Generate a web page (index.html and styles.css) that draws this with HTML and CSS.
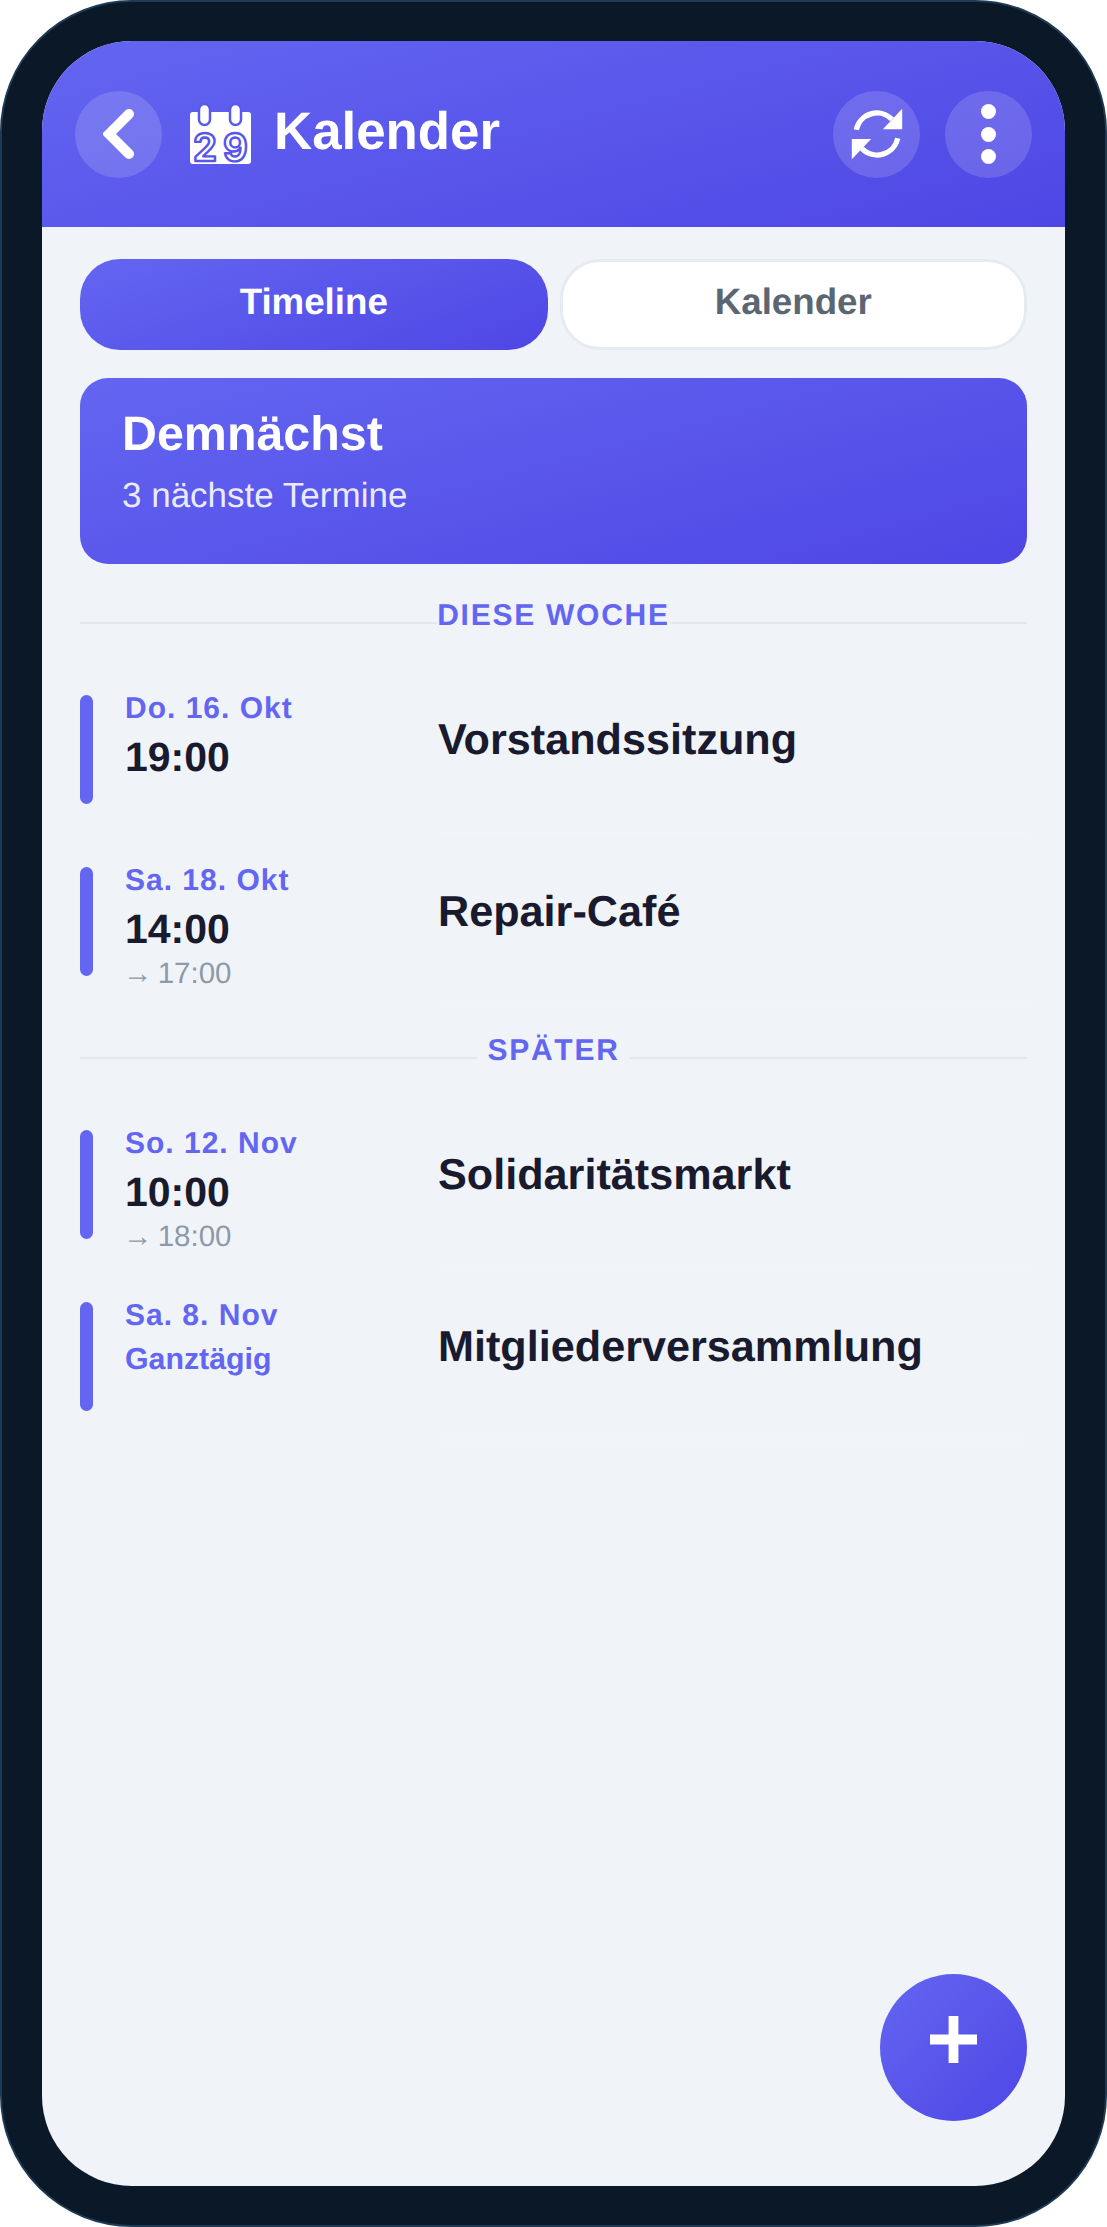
FILE: index.html
```html
<!DOCTYPE html>
<html lang="de">
<head>
<meta charset="utf-8">
<title>Kalender</title>
<link rel="stylesheet" href="styles.css">
</head>
<body>
<div class="phone">
  <div class="screen">
    <header class="header">
      <button class="round back" aria-label="Zurück">
        <svg class="ico-back" viewBox="0 0 32 50"><path d="M26 5 L6 25 L26 45"/></svg>
      </button>
      <svg class="ico-cal" viewBox="0 0 61 60">
        <rect class="cal-body" x="0" y="8" width="61" height="52" rx="3"/>
        <rect class="cal-ring" x="9" y="0" width="11" height="21" rx="5.5"/>
        <rect class="cal-ring" x="40" y="0" width="11" height="21" rx="5.5"/>
        <text class="cal-num" x="3" y="57">2</text>
        <text class="cal-num" x="33" y="57">9</text>
      </svg>
      <h1 class="title">Kalender</h1>
      <div class="actions">
        <button class="round" aria-label="Aktualisieren">
          <svg class="ico-sync" viewBox="0 0 512 512">
            <path class="arc" d="M52 214 A208 208 0 0 1 404 112"/>
            <polygon class="tip" points="504,8 504,208 314,208"/>
            <path class="arc" d="M460 298 A208 208 0 0 1 108 400"/>
            <polygon class="tip" points="8,504 8,304 198,304"/>
          </svg>
        </button>
        <button class="round" aria-label="Menü">
          <span class="dots"><i></i><i></i><i></i></span>
        </button>
      </div>
    </header>

    <main class="content">
      <div class="tabs">
        <div class="tab active">Timeline</div>
        <div class="tab">Kalender</div>
      </div>

      <section class="hero">
        <h2>Demnächst</h2>
        <p>3 nächste Termine</p>
      </section>

      <div class="section first"><span>DIESE WOCHE</span></div>

      <article class="row">
        <div class="bar"></div>
        <div class="when">
          <div class="date">Do. 16. Okt</div>
          <div class="time">19:00</div>
        </div>
        <div class="what">Vorstandssitzung</div>
      </article>
      <article class="row">
        <div class="bar"></div>
        <div class="when">
          <div class="date">Sa. 18. Okt</div>
          <div class="time">14:00</div>
          <div class="end">→ 17:00</div>
        </div>
        <div class="what">Repair-Café</div>
      </article>

      <div class="section"><span>SPÄTER</span></div>

      <article class="row">
        <div class="bar"></div>
        <div class="when">
          <div class="date">So. 12. Nov</div>
          <div class="time">10:00</div>
          <div class="end">→ 18:00</div>
        </div>
        <div class="what">Solidaritätsmarkt</div>
      </article>
      <article class="row">
        <div class="bar"></div>
        <div class="when">
          <div class="date">Sa. 8. Nov</div>
          <div class="allday">Ganztägig</div>
        </div>
        <div class="what">Mitgliederversammlung</div>
      </article>
    </main>

    <button class="fab" aria-label="Neu">
      <svg viewBox="0 0 48 48"><path d="M24 0V48M0 24H48"/></svg>
    </button>
  </div>
</div>
</body>
</html>
```

FILE: styles.css
```css
* { box-sizing: border-box; }
html, body { margin: 0; padding: 0; background: #fff; }
body {
  font-family: "Liberation Sans", Arial, sans-serif;
  width: 1107px;
  height: 2227px;
  text-rendering: geometricPrecision;
}

.phone {
  width: 1107px;
  height: 2227px;
  padding: 39px 40px;
  background: #0a1828;
  border: 2px solid #1e3a54;
  border-radius: 132px;
}
.screen {
  position: relative;
  height: 100%;
  display: flex;
  flex-direction: column;
  background: #f0f4f9;
  border-radius: 90px;
  overflow: hidden;
}

.header {
  height: 186px;
  flex: none;
  display: flex;
  align-items: center;
  padding: 0 33px;
  color: #fff;
  background: linear-gradient(165deg, #6366f1 0%, #4f46e5 100%);
}
.round {
  width: 87px;
  height: 87px;
  flex: none;
  padding: 0;
  border: 0;
  border-radius: 50%;
  background: rgba(255, 255, 255, 0.15);
  display: flex;
  align-items: center;
  justify-content: center;
}
.ico-back { width: 32px; height: 50px; }
.ico-back path { fill: none; stroke: #fff; stroke-width: 10; stroke-linecap: round; stroke-linejoin: miter; }
.ico-cal { width: 61px; height: 60px; margin-left: 28px; overflow: visible; flex: none; }
.cal-body { fill: #fff; }
.cal-ring { fill: #fff; stroke: #5b58ec; stroke-width: 2.5; }
.cal-num {
  font-family: Inter, "Liberation Sans", sans-serif;
  font-size: 38px;
  font-weight: 700;
  fill: #fff;
  stroke: #5756e9;
  stroke-width: 2.4;
  stroke-linejoin: round;
}
.title { margin: 0 0 3px 23px; font-size: 52.8px; font-weight: 700; line-height: 1; }
.actions { margin-left: auto; display: flex; gap: 25px; }
.ico-sync { width: 52px; height: 52px; }
.arc { fill: none; stroke: #fff; stroke-width: 52; }
.tip { fill: #fff; }
.dots { display: flex; flex-direction: column; gap: 7.5px; }
.dots i { display: block; width: 15px; height: 15px; border-radius: 50%; background: #fff; }

.content { flex: 1; padding: 32px 38px 0; }
.tabs { display: flex; gap: 12px; }
.tab {
  flex: 1 1 0;
  height: 91px;
  padding-bottom: 5px;
  border-radius: 40px;
  border: 3px solid #e6ebf1;
  background: #fff;
  color: #5b6673;
  font-size: 36.7px;
  font-weight: 700;
  display: flex;
  align-items: center;
  justify-content: center;
}
.tab.active {
  border-color: transparent;
  color: #fff;
  background: linear-gradient(160deg, #6366f1 0%, #4f46e5 100%) border-box;
}

.hero {
  margin-top: 28px;
  height: 186px;
  padding: 28px 42px 0;
  border-radius: 28px;
  color: #fff;
  background: linear-gradient(165deg, #6366f1 0%, #4f46e5 100%);
}
.hero h2 { margin: 0; font-size: 48.4px; font-weight: 700; line-height: 56px; }
.hero p { margin: 14px 0 0; font-size: 35px; line-height: 40px; color: rgba(255, 255, 255, 0.9); }

.section {
  position: relative;
  height: 58px;
  margin-top: 33px;
  display: flex;
  justify-content: center;
  align-items: flex-start;
}
.section.first { margin-top: 40px; }
.section::before {
  content: "";
  position: absolute;
  left: 0;
  right: 0;
  top: 18px;
  height: 2px;
  background: #e2e8f0;
}
.section span {
  position: relative;
  background: #f0f4f9;
  padding: 0 10px;
  color: #6366f1;
  font-size: 30px;
  font-weight: 700;
  line-height: 24px;
  letter-spacing: 1.75px;
}
.section.first span { padding: 0; }

.row { display: flex; height: 172px; padding-top: 33px; }
.bar { width: 13px; height: 109px; flex: none; border-radius: 6.5px; background: #6366f1; }
.when { width: 345px; flex: none; padding-left: 32px; margin-top: -3px; }
.date { font-size: 30px; font-weight: 700; line-height: 34px; letter-spacing: 1px; color: #6366f1; }
.time { margin-top: 6px; font-size: 41px; font-weight: 700; line-height: 50px; color: #1a1a2e; }
.end { margin: 3px 0 0 -2px; font-size: 29.5px; line-height: 34px; word-spacing: -3px; color: #8d99a8; }
.allday { margin-top: 10px; font-size: 30.3px; font-weight: 700; line-height: 34px; color: #6366f1; }
.what {
  flex: 1;
  height: 139px;
  padding-top: 20px;
  font-size: 43.2px;
  font-weight: 700;
  line-height: 50px;
  color: #1a1a2e;
  border-bottom: 2px solid #f1f5f9;
}

.fab {
  position: absolute;
  right: 38px;
  bottom: 65px;
  width: 147px;
  height: 147px;
  padding: 0 0 16px;
  border: 0;
  border-radius: 50%;
  background: linear-gradient(135deg, #6366f1 0%, #4f46e5 100%);
  display: flex;
  align-items: center;
  justify-content: center;
}
.fab svg { width: 47px; height: 47px; }
.fab path { fill: none; stroke: #fff; stroke-width: 10; }
```
